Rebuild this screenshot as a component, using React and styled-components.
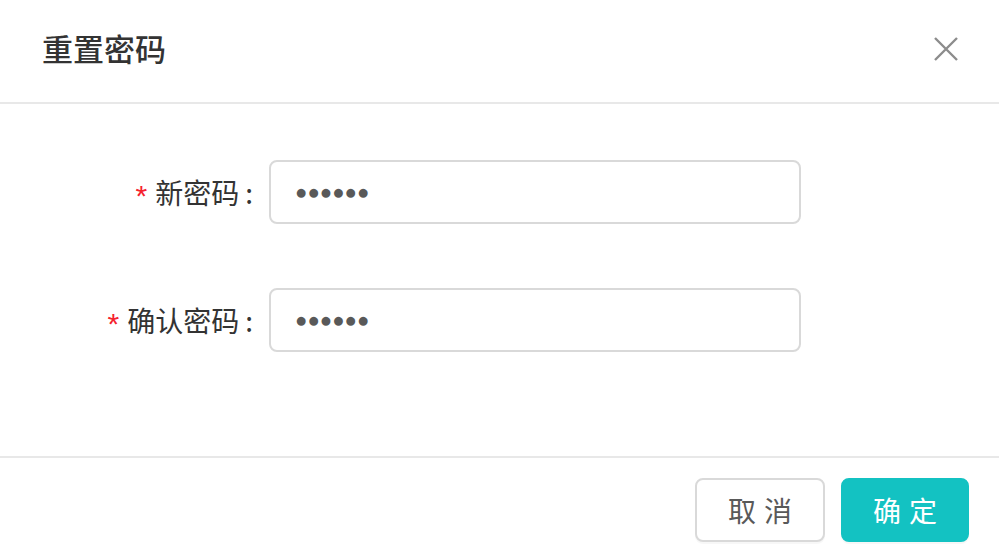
import React from "react"
import styled, { createGlobalStyle } from "styled-components";

const GlobalStyle = createGlobalStyle`
    html, body {
        margin: 0;
        padding: 0;
        background: #fff;
    }
    body {
        font-family: "Noto Sans CJK SC", "Noto Sans", sans-serif;
        color: #333;
    }
`

const Modal = styled.div`
    width: 999px;
    height: 555px;
    display: flex;
    flex-direction: column;
    background: #fff;
`

const Header = styled.div`
    height: 102px;
    flex-shrink: 0;
    display: flex;
    align-items: center;
    justify-content: space-between;
    padding: 0 42px;
    border-bottom: 2px solid #e8e8e8;
`

const Title = styled.h2`
    margin: -7px 0 0;
    font-size: 31px;
    font-weight: 500;
    color: #333;
    line-height: 1;
`

const Close = styled.button`
    border: 0;
    background: none;
    padding: 0;
    width: 26px;
    height: 26px;
    margin-right: -2px;
    margin-top: -4px;
    display: flex;
    align-items: center;
    justify-content: center;
    cursor: pointer;
`

const Body = styled.form`
    flex: 1;
    display: flex;
    flex-direction: column;
    gap: 64px;
    padding-top: 56px;
`

const Row = styled.div`
    display: flex;
    align-items: center;
`

const Label = styled.label`
    width: 269px;
    display: flex;
    justify-content: flex-end;
    align-items: center;
    font-size: 28px;
    color: #333;
    padding-right: 16px;
    box-sizing: border-box;
`

const Star = styled.span`
    color: #f5222d;
    margin-right: 8px;
    font-size: 30px;
    font-family: "Liberation Sans", sans-serif;
    line-height: 1;
    margin-top: 8px;
`

const Colon = styled.span`
    margin-left: 6px;
`

const Input = styled.input`
    width: 532px;
    height: 64px;
    box-sizing: border-box;
    border: 2px solid #d9d9d9;
    border-radius: 8px;
    padding: 0 24px;
    font-size: 20.5px;
    color: #595959;
    outline: none;
    font-family: "Liberation Sans", sans-serif;
`

const Footer = styled.div`
    height: 99px;
    flex-shrink: 0;
    box-sizing: border-box;
    border-top: 2px solid #e8e8e8;
    display: flex;
    justify-content: flex-end;
    align-items: flex-start;
    gap: 16px;
    padding: 20px 30px 0 0;
`

const Button = styled.button`
    height: 64px;
    width: ${(p) => (p.$primary ? "128px" : "130px")};
    border-radius: 8px;
    border: 2px solid ${(p) => (p.$primary ? "#13c2c2" : "#d9d9d9")};
    background: ${(p) => (p.$primary ? "#13c2c2" : "#fff")};
    color: ${(p) => (p.$primary ? "#fff" : "#595959")};
    font-size: 28px;
    letter-spacing: 8px;
    padding: 0 0 0 8px;
    font-family: "Noto Sans CJK SC", sans-serif;
    box-shadow: 0 2px 0 rgba(0, 0, 0, 0.03);
    cursor: pointer;
`

const App = () => {
    return (
        <Modal>
            <GlobalStyle />
            <Header>
                <Title>重置密码</Title>
                <Close aria-label="关闭">
                    <svg width="24" height="24" viewBox="0 0 24 24">
                        <path d="M1 1 L23 23 M23 1 L1 23" stroke="#8c8c8c" strokeWidth="2.4" fill="none" />
                    </svg>
                </Close>
            </Header>
            <Body>
                <Row>
                    <Label htmlFor="newPassword">
                        <Star>*</Star>新密码<Colon>:</Colon>
                    </Label>
                    <Input id="newPassword" type="text" defaultValue="●●●●●●" readOnly />
                </Row>
                <Row>
                    <Label htmlFor="confirmPassword">
                        <Star>*</Star>确认密码<Colon>:</Colon>
                    </Label>
                    <Input id="confirmPassword" type="text" defaultValue="●●●●●●" readOnly />
                </Row>
            </Body>
            <Footer>
                <Button type="button">取消</Button>
                <Button type="button" $primary>确定</Button>
            </Footer>
        </Modal>
    )
};

export default App;
